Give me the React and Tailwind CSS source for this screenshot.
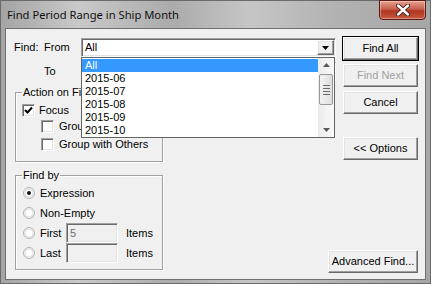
import React from 'react'

const raised =
  'border border-t-white border-l-white border-r-[#696969] border-b-[#696969] shadow-[inset_-1px_-1px_0_#a0a0a0,inset_1px_1px_0_#e3e3e3]'
const sunken =
  'border border-t-[#a0a0a0] border-l-[#a0a0a0] border-r-white border-b-white shadow-[inset_1px_1px_0_#696969,inset_-1px_-1px_0_#e3e3e3]'

const Button = ({ label, w = 'w-[75px]', def, disabled }) => (
  <div
    className={`h-[23px] ${w} shrink-0 flex items-center justify-center bg-[#f0f0f0] ${
      def ? 'outline outline-1 outline-black' : ''
    } ${raised} ${disabled ? 'text-[#a0a0a0]' : 'text-black'}`}
  >
    {label}
  </div>
)

const Combo = ({ value }) => (
  <div className={`w-[255px] h-[19px] shrink-0 bg-white flex items-center ${sunken}`}>
    <span className="pl-[3px] flex-1 leading-none">{value}</span>
    <div className={`w-[17px] h-[15px] mr-[1px] flex items-center justify-center bg-[#f0f0f0] ${raised}`}>
      <svg width="7" height="4" viewBox="0 0 7 4">
        <path d="M0 0h7L3.5 4z" fill="#000" />
      </svg>
    </div>
  </div>
)

const Check = ({ checked }) => (
  <div className={`w-[13px] h-[13px] shrink-0 bg-white flex items-center justify-center ${sunken}`}>
    {checked && (
      <svg width="9" height="9" viewBox="0 0 9 9">
        <path d="M1 4l2.5 2.5L8 1.5" stroke="#000" strokeWidth="2" fill="none" />
      </svg>
    )}
  </div>
)

const Radio = ({ on }) => (
  <svg width="12" height="12" viewBox="0 0 12 12" className="shrink-0">
    <circle cx="6" cy="6" r="5.5" fill="#f4f4f4" stroke="#b4b4b4" />
    <circle cx="6" cy="6" r="4" fill="#fff" stroke="#e0e0e0" />
    {on && <circle cx="6" cy="6" r="2" fill="#111" />}
  </svg>
)

const Group = ({ title, className, children }) => (
  <fieldset
    className={`ml-[9px] w-[148px] border border-[#a0a0a0] shadow-[inset_1px_1px_0_#fff,1px_1px_0_#fff] ${className}`}
  >
    <legend className="ml-[6px] px-[1px] leading-[13px]">{title}</legend>
    {children}
  </fieldset>
)

const items = ['All', '2015-06', '2015-07', '2015-08', '2015-09', '2015-10']

export default function App() {
  return (
    <div
      className="w-[431px] h-[284px] flex flex-col bg-[linear-gradient(90deg,#a4a4a4,#c9c9c9_18%,#ababab_40%,#c6c6c6_58%,#b2b2b2_78%,#a6a6a6)] border border-[#6a6a6a] font-['Liberation_Sans',sans-serif] text-[11px] text-black"
    >
      {/* title bar */}
      <div className="h-[27px] flex items-start">
        <span className="pl-[6px] pt-[6px] font-['Noto_Sans',sans-serif] text-[11.2px] text-[#101010]">
          Find Period Range in Ship Month
        </span>
        <div className="ml-auto mr-[4px] mt-[-1px] w-[47px] h-[20px] rounded-b-[4px] border border-[#5a1a14] bg-[linear-gradient(180deg,#e8a090,#c8604e_45%,#b0341f_55%,#c85a40)] flex items-center justify-center shadow-[inset_0_0_0_1px_rgba(255,255,255,0.35)]">
          <svg width="14" height="12" viewBox="0 0 14 12">
            <path
              d="M2 1.5L12 10.5M12 1.5L2 10.5"
              stroke="#3a1810"
              strokeWidth="4.2"
              strokeLinecap="round"
            />
            <path
              d="M2 1.5L12 10.5M12 1.5L2 10.5"
              stroke="#fff"
              strokeWidth="2.4"
              strokeLinecap="round"
            />
          </svg>
        </div>
      </div>

      {/* client area */}
      <div className="ml-[4px] w-[421px] h-[252px] border border-[#6f6f6f] bg-[#f0f0f0] relative flex">
        <div className="w-[330px] shrink-0 flex flex-col">
          <div className="mt-[9px] h-[19px] flex items-center">
            <span className="pl-[8px] w-[38px]">Find:</span>
            <span className="w-[37px]">From</span>
            <Combo value="All" />
          </div>
          <div className="mt-[5px] h-[19px] flex items-center">
            <span className="pl-[38px] w-[75px]">To</span>
            <Combo value="" />
          </div>

          <Group title="Action on Find" className="mt-[5px] h-[76px]">
            <div className="mt-[5px] ml-[6px] h-[13px] leading-[13px] flex items-center gap-[4px]">
              <Check checked />
              <span>Focus</span>
            </div>
            <div className="mt-[3px] ml-[25px] h-[13px] leading-[13px] flex items-center gap-[5px]">
              <Check />
              <span>Group</span>
            </div>
            <div className="mt-[5px] ml-[25px] h-[13px] leading-[13px] flex items-center gap-[5px]">
              <Check />
              <span>Group with Others</span>
            </div>
          </Group>

          <Group title="Find by" className="mt-[7px] h-[101px]">
            <div className="mt-[1px] ml-[7px] h-[20px] flex items-center gap-[5px]">
              <Radio on />
              <span>Expression</span>
            </div>
            <div className="ml-[7px] h-[20px] flex items-center gap-[5px]">
              <Radio />
              <span>Non-Empty</span>
            </div>
            <div className="ml-[7px] h-[20px] flex items-center">
              <Radio />
              <span className="ml-[5px] w-[26px]">First</span>
              <div className={`w-[52px] h-[20px] bg-[#f0f0f0] flex items-center pl-[3px] text-[#6d6d6d] ${sunken}`}>5</div>
              <span className="ml-[8px]">Items</span>
            </div>
            <div className="ml-[7px] h-[20px] flex items-center">
              <Radio />
              <span className="ml-[5px] w-[26px]">Last</span>
              <div className={`w-[52px] h-[20px] bg-[#f0f0f0] ${sunken}`} />
              <span className="ml-[8px]">Items</span>
            </div>
          </Group>
        </div>

        {/* buttons */}
        <div className="ml-auto mr-[7px] w-[75px] pt-[8px] pb-[6px] flex flex-col items-end">
          <Button label="Find All" def />
          <div className="mt-[4px]">
            <Button label="Find Next" disabled />
          </div>
          <div className="mt-[4px]">
            <Button label="Cancel" />
          </div>
          <div className="mt-[23px]">
            <Button label="<< Options" />
          </div>
          <div className="mt-auto">
            <Button label="Advanced Find..." w="w-[90px]" />
          </div>
        </div>

        {/* open dropdown list */}
        <div className="absolute left-[75px] top-[28px] w-[254px] h-[81px] bg-white border border-[#646464] flex">
          <div className="flex-1 flex flex-col pt-[1px]">
            {items.map((it, i) => (
              <div
                key={it}
                className={`h-[13px] leading-[13px] pl-[3px] ${i === 0 ? 'bg-[#3399ff] text-white' : ''}`}
              >
                {it}
              </div>
            ))}
          </div>
          <div className="w-[16px] flex flex-col items-center bg-[linear-gradient(90deg,#ececec,#f9f9f9)]">
            <svg className="mt-[5px]" width="7" height="4" viewBox="0 0 7 4">
              <path d="M3.5 0L7 4H0z" fill="#5a5a5a" />
            </svg>
            <div className="mt-[7px] w-[14px] h-[31px] rounded-[2px] border border-[#979797] bg-[linear-gradient(90deg,#f2f2f2,#dedede)] flex flex-col items-center justify-center gap-[2px]">
              <div className="w-[7px] h-px bg-[#6a6a6a]" />
              <div className="w-[7px] h-px bg-[#6a6a6a]" />
              <div className="w-[7px] h-px bg-[#6a6a6a]" />
              <div className="w-[7px] h-px bg-[#6a6a6a]" />
            </div>
            <svg className="mt-auto mb-[5px]" width="7" height="4" viewBox="0 0 7 4">
              <path d="M0 0h7L3.5 4z" fill="#5a5a5a" />
            </svg>
          </div>
        </div>
      </div>
    </div>
  )
}
